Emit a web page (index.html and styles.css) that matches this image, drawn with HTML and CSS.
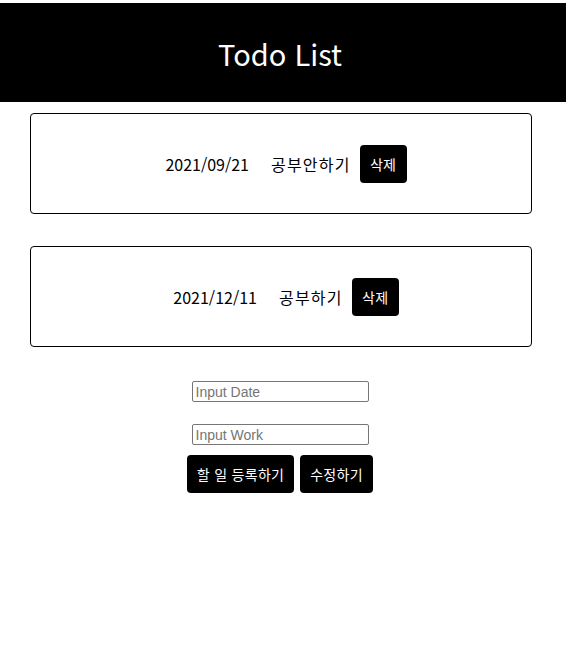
FILE: index.html
```html
<!DOCTYPE html>
<html lang="ko">
<head>
<meta charset="utf-8">
<title>Todo List</title>
<link rel="stylesheet" href="styles.css">
</head>
<body>
<header class="header"><h1 class="title">Todo List</h1></header>
<main class="list">
  <div class="card">
    <span class="date">2021/09/21</span>
    <span class="work">공부안하기</span>
    <button class="btn">삭제</button>
  </div>
  <div class="card">
    <span class="date">2021/12/11</span>
    <span class="work">공부하기</span>
    <button class="btn">삭제</button>
  </div>
</main>
<section class="form">
  <input class="field" type="text" placeholder="Input Date">
  <input class="field" type="text" placeholder="Input Work">
  <div class="actions">
    <button class="btn btn-wide">할 일 등록하기</button>
    <button class="btn btn-mid">수정하기</button>
  </div>
</section>
</body>
</html>
```
FILE: styles.css
```css
html, body {
  margin: 0;
  padding: 0;
  background: #fff;
}
body {
  padding-top: 3px;
  font-family: "Noto Sans CJK KR", "Noto Sans", sans-serif;
  color: #000;
}
.header {
  background: #000;
  height: 99px;
  display: flex;
  align-items: center;
  justify-content: center;
}
.title {
  margin: 0;
  color: #fff;
  font-weight: 400;
  font-size: 29px;
  line-height: 1;
  position: relative;
  top: 1px;
  left: -3px;
}
.list {
  display: flex;
  flex-direction: column;
  gap: 32px;
  padding: 11px 34px 0 30px;
}
.card {
  box-sizing: border-box;
  height: 101px;
  border: 1px solid #000;
  border-radius: 4px;
  padding-left: 10px;
  display: flex;
  align-items: center;
  justify-content: center;
}
.date {
  font-size: 16px;
  margin-right: 22px;
}
.work {
  font-size: 16px;
  letter-spacing: 1.2px;
  margin-right: 9px;
}
.btn {
  background: #000;
  color: #fff;
  border: none;
  border-radius: 4px;
  height: 38px;
  width: 47px;
  padding: 0;
  font-family: "Noto Sans CJK KR", "Noto Sans", sans-serif;
  font-size: 14px;
  letter-spacing: 0.3px;
}
.form {
  display: flex;
  flex-direction: column;
  align-items: center;
  padding-top: 34px;
  padding-right: 6px;
}
.field {
  box-sizing: border-box;
  width: 177px;
  height: 21px;
  border: 1px solid #767676;
  border-radius: 2px;
  padding: 1px 3px;
  font-family: "Liberation Sans", Arial, sans-serif;
  font-size: 14px;
  margin-bottom: 22px;
}
.field:nth-of-type(2) {
  margin-bottom: 10px;
}
.field::placeholder {
  color: #757575;
}
.actions {
  display: flex;
  gap: 6px;
}
.btn-wide {
  width: 107px;
}
.btn-mid {
  width: 73px;
}
```
